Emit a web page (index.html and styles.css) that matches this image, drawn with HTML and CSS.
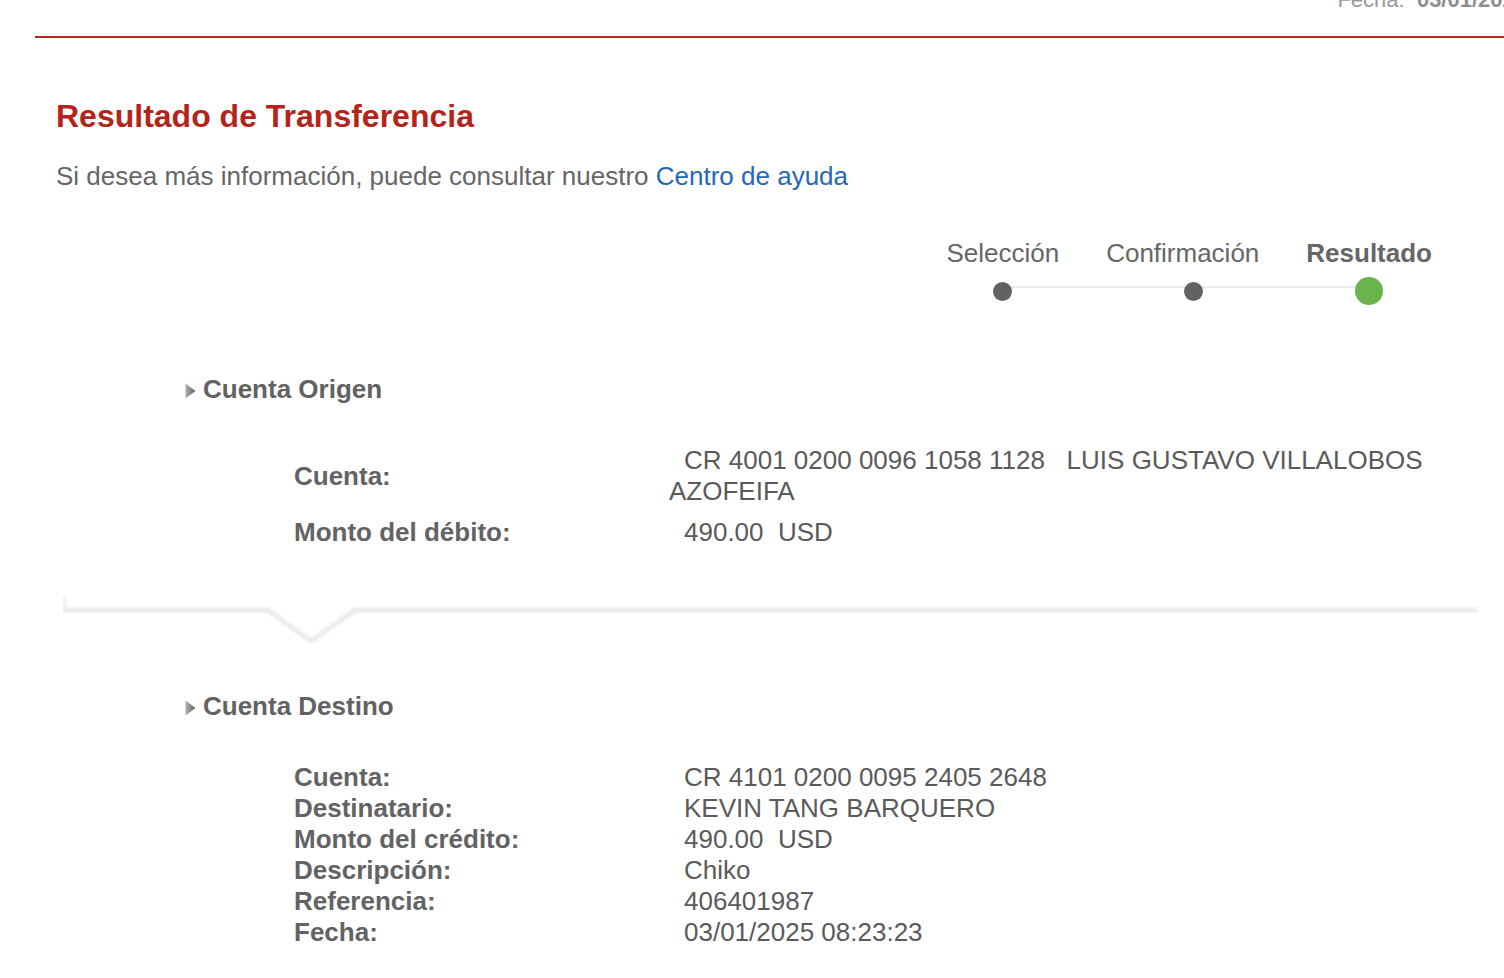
FILE: index.html
```html
<!DOCTYPE html>
<html lang="es">
<head>
<meta charset="utf-8">
<title>Resultado de Transferencia</title>
<link rel="stylesheet" href="styles.css">
</head>
<body>
<header class="topbar">
  <div class="topbar__date">Fecha:&nbsp; <strong>03/01/2025</strong></div>
</header>
<main class="main">
  <h1 class="title">Resultado de Transferencia</h1>
  <p class="intro">Si desea más información, puede consultar nuestro <a class="intro__link" href="#">Centro de ayuda</a></p>

  <div class="stepper">
    <div class="step">
      <span class="step__label">Selección</span>
      <span class="step__dot"></span>
    </div>
    <div class="step step--shift">
      <span class="step__label">Confirmación</span>
      <span class="step__dot"></span>
    </div>
    <div class="step step--active">
      <span class="step__label">Resultado</span>
      <span class="step__dot"></span>
    </div>
  </div>

  <section class="block block--origin">
    <h2 class="block__title">
      <svg class="block__arrow" width="11" height="16" viewBox="0 0 11 16" aria-hidden="true">
        <defs>
          <linearGradient id="ga" x1="0" y1="0" x2="1" y2="0">
            <stop offset="0" stop-color="#b0b0b0"/>
            <stop offset="1" stop-color="#606060"/>
          </linearGradient>
        </defs>
        <polygon points="0.5,0.5 10.5,8 0.5,15.5" fill="url(#ga)"/>
      </svg>
      Cuenta Origen
    </h2>
    <div class="fields">
      <div class="field field--tall">
        <span class="field__label">Cuenta:</span>
        <span class="field__value">CR 4001 0200 0096 1058 1128&nbsp;&nbsp; LUIS GUSTAVO VILLALOBOS AZOFEIFA</span>
      </div>
      <div class="field">
        <span class="field__label">Monto del débito:</span>
        <span class="field__value">490.00&nbsp; USD</span>
      </div>
    </div>
  </section>

  <div class="divider">
    <svg width="1424" height="52" viewBox="0 0 1424 52" aria-hidden="true">
      <defs>
        <filter id="soft" x="-5%" y="-50%" width="110%" height="200%">
          <feGaussianBlur stdDeviation="1.6"/>
        </filter>
      </defs>
      <polyline points="1,3 1,15 205,15 248,46 292,15 1414,15" fill="none" stroke="#e4e4e4" stroke-width="4" filter="url(#soft)"/>
      <polyline points="1,3 1,14 205,14 248,45 292,14 1414,14" fill="none" stroke="#f0f0f0" stroke-width="2"/>
    </svg>
  </div>

  <section class="block block--dest">
    <h2 class="block__title">
      <svg class="block__arrow" width="11" height="16" viewBox="0 0 11 16" aria-hidden="true">
        <defs>
          <linearGradient id="gb" x1="0" y1="0" x2="1" y2="0">
            <stop offset="0" stop-color="#b0b0b0"/>
            <stop offset="1" stop-color="#606060"/>
          </linearGradient>
        </defs>
        <polygon points="0.5,0.5 10.5,8 0.5,15.5" fill="url(#gb)"/>
      </svg>
      Cuenta Destino
    </h2>
    <div class="fields">
      <div class="field">
        <span class="field__label">Cuenta:</span>
        <span class="field__value">CR 4101 0200 0095 2405 2648</span>
      </div>
      <div class="field">
        <span class="field__label">Destinatario:</span>
        <span class="field__value">KEVIN TANG BARQUERO</span>
      </div>
      <div class="field">
        <span class="field__label">Monto del crédito:</span>
        <span class="field__value">490.00&nbsp; USD</span>
      </div>
      <div class="field">
        <span class="field__label">Descripción:</span>
        <span class="field__value">Chiko</span>
      </div>
      <div class="field">
        <span class="field__label">Referencia:</span>
        <span class="field__value">406401987</span>
      </div>
      <div class="field">
        <span class="field__label">Fecha:</span>
        <span class="field__value">03/01/2025 08:23:23</span>
      </div>
    </div>
  </section>
</main>
</body>
</html>
```

FILE: styles.css
```css
* {
  box-sizing: border-box;
}

html, body {
  margin: 0;
  padding: 0;
  background: #ffffff;
  overflow: hidden;
}

body {
  font-family: "Liberation Sans", Arial, Helvetica, sans-serif;
  color: #5f5f5f;
  width: 1504px;
  height: 978px;
}

.topbar {
  margin-left: 35px;
  height: 38px;
  border-bottom: 2px solid #b6281d;
  display: flex;
  justify-content: flex-end;
}

.topbar__date {
  margin-top: -11px;
  margin-right: -23px;
  font-size: 22px;
  line-height: 22px;
  color: #9a9a9a;
  white-space: nowrap;
}

.topbar__date strong {
  font-weight: bold;
  color: #8e8e8e;
}

.main {
  padding-left: 56px;
}

.title {
  margin: 60px 0 0;
  font-size: 32px;
  line-height: 36px;
  font-weight: bold;
  color: #b3251a;
}

.intro {
  margin: 27px 0 0;
  font-size: 26px;
  line-height: 31px;
  color: #666666;
}

.intro__link {
  color: #2469b8;
  text-decoration: none;
}

.stepper {
  position: relative;
  display: flex;
  justify-content: flex-end;
  gap: 47px;
  margin-top: 46px;
  padding-right: 72px;
}

.stepper::before {
  content: "";
  position: absolute;
  right: 136px;
  width: 365px;
  top: 48px;
  height: 2px;
  background: #ececec;
}

.step {
  display: flex;
  flex-direction: column;
  align-items: center;
  gap: 8px;
  position: relative;
}

.step__label {
  font-size: 26px;
  line-height: 31px;
  color: #666666;
  white-space: nowrap;
}

.step__dot {
  width: 28px;
  height: 28px;
  display: flex;
  align-items: center;
  justify-content: center;
}

.step__dot::after {
  content: "";
  width: 19px;
  height: 19px;
  border-radius: 50%;
  background: #626262;
}

.step--shift .step__dot {
  margin-left: 22px;
}

.step--active .step__label {
  font-weight: bold;
}

.step--active .step__dot::after {
  width: 28px;
  height: 28px;
  background: #6ab44c;
}

.block {
  padding-left: 129px;
}

.block--origin {
  margin-top: 69px;
}

.block--dest {
  margin-top: 44px;
}

.block__title {
  margin: 0;
  display: flex;
  align-items: center;
  gap: 7px;
  font-size: 26px;
  line-height: 31px;
  font-weight: bold;
  color: #626262;
}

.block__arrow {
  flex: none;
  margin-top: 2px;
}

.fields {
  margin-top: 40px;
  padding-left: 109px;
  width: 1292px;
}

.field {
  display: grid;
  grid-template-columns: 375px 1fr;
  align-items: center;
  font-size: 26px;
  line-height: 31px;
}

.field--tall {
  margin-bottom: 10px;
}

.field__label {
  font-weight: bold;
  color: #636363;
}

.field__value {
  color: #5a5a5a;
  text-indent: 15px;
}

.divider {
  margin-top: 47px;
  margin-left: 7px;
  line-height: 0;
}
```
